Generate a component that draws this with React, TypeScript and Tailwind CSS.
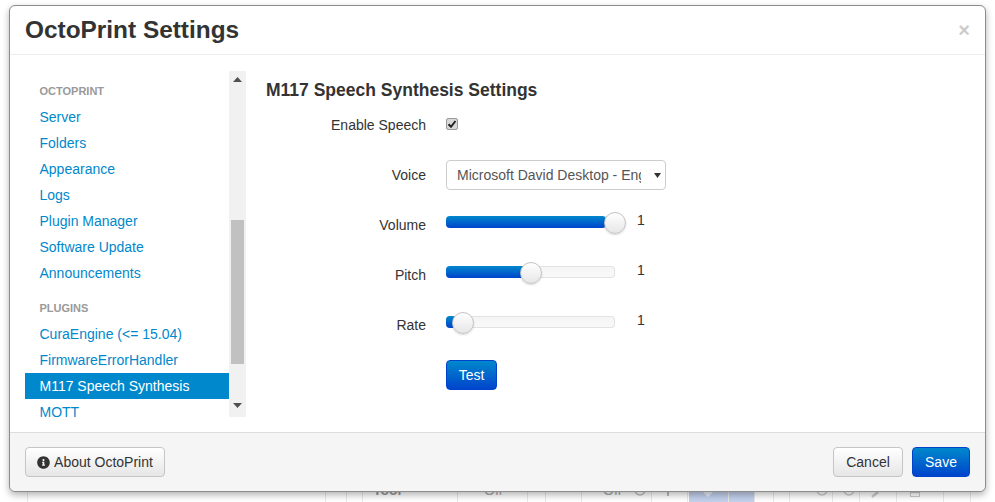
import { FaInfoCircle } from "react-icons/fa";

const FONT = "font-['Liberation_Sans',Arial,sans-serif]";

const coreLinks = ["Server", "Folders", "Appearance", "Logs", "Plugin Manager", "Software Update", "Announcements"];
const pluginLinks = ["CuraEngine (<= 15.04)", "FirmwareErrorHandler", "M117 Speech Synthesis", "MQTT"];

function NavLink({ label }: { label: string }) {
  const active = label === "M117 Speech Synthesis";
  return (
    <div className={`h-[26px] pl-[14.5px] text-[14px] leading-[26px] ${active ? "bg-[#0088cc] text-white" : "text-[#0088cc]"}`}>
      {label}
    </div>
  );
}

function FieldRow({ label, children }: { label: string; children: React.ReactNode }) {
  return (
    <div className="flex h-[50px] items-start">
      <div className="w-[160px] pt-[1px] text-right text-[14px] leading-[20px] text-[#333]">{label}</div>
      <div className="ml-[20px] min-w-0 flex-1">{children}</div>
    </div>
  );
}

function Slider({ fill, handle }: { fill: number; handle: number }) {
  return (
    <div className="flex h-[30px] items-start">
      <div className="relative mt-[2px] h-[12px] w-[169px] rounded-[4px] bg-[linear-gradient(to_bottom,#f5f5f5,#f9f9f9)] shadow-[inset_0_0_0_1px_#e3e3e3]">
        <div
          className="h-full rounded-[4px] bg-[linear-gradient(to_bottom,#0088cc,#0044cc)]"
          style={{ width: fill }}
        />
        <div
          className="absolute top-[-4px] h-[22px] w-[22px] rounded-full border border-[#c4c4c4] bg-[linear-gradient(to_bottom,#ffffff,#e6e6e6)] shadow-[0_1px_2px_rgba(0,0,0,0.15)]"
          style={{ left: handle }}
        />
      </div>
      <span className="ml-[22px] mt-[-1px] text-[14px] leading-[14px] text-[#333]">1</span>
    </div>
  );
}

const gridLines = [27, 325, 346, 362, 457, 527, 545, 581, 651, 687, 728, 754, 773, 789, 832, 859, 896, 943, 970];

export default function App() {
  return (
    <div className={`relative h-[502px] w-[995px] overflow-hidden bg-white ${FONT}`}>
      {/* table peeking out below the dialog */}
      <div className="absolute inset-x-0 top-[480px] h-[22px] bg-white">
        <div className="absolute left-[689px] top-0 h-full w-[65px] bg-[#c2d0ec]" />
        {gridLines.map((x) => (
          <div key={x} className="absolute top-0 h-full w-px bg-[#e8e8e8]" style={{ left: x }} />
        ))}
        <span className="absolute left-[373px] top-[0px] text-[14px] font-bold leading-[20px] text-[#999]">Tool</span>
        <span className="absolute left-[484px] top-[0px] text-[14px] leading-[20px] text-[#aaa]">Off</span>
        <span className="absolute left-[603px] top-[0px] text-[14px] leading-[20px] text-[#aaa]">Off</span>
        <svg width="12" height="22" viewBox="0 0 12 22" className="absolute left-[634px] top-0">
          <circle cx="6" cy="10" r="5" fill="none" stroke="#bbb" strokeWidth="1.5" />
        </svg>
        <div className="absolute left-[667px] top-[12px] h-[4px] w-[2px] bg-[#bbb]" />
        <svg width="10" height="22" viewBox="0 0 10 22" className="absolute left-[703px] top-0">
          <path d="M0 12 L10 12 L5 17 Z" fill="#e8edf7" />
        </svg>
        <svg width="12" height="22" viewBox="0 0 12 22" className="absolute left-[816px] top-0">
          <circle cx="6" cy="10" r="5" fill="none" stroke="#ccc" strokeWidth="1.5" />
        </svg>
        <svg width="12" height="22" viewBox="0 0 12 22" className="absolute left-[843px] top-0">
          <circle cx="6" cy="10" r="5" fill="none" stroke="#ccc" strokeWidth="1.5" />
        </svg>
        <svg width="12" height="22" viewBox="0 0 12 22" className="absolute left-[870px] top-0">
          <path d="M2 17 L8 12" fill="none" stroke="#ccc" strokeWidth="2.5" />
        </svg>
        <div className="absolute left-[910px] top-[12px] h-[5px] w-[10px] border border-[#ccc]" />
      </div>

      {/* dialog */}
      <div className="absolute left-[9px] top-[5px] flex h-[487px] w-[977px] flex-col overflow-hidden rounded-[6px] border border-[#8c8c8c] bg-white shadow-[0_3px_7px_rgba(0,0,0,0.3)]">
        <div className="flex h-[49px] shrink-0 items-center justify-between border-b border-[#eeeeee] pl-[15px] pr-[15px]">
          <h3 className="text-[24.4px] font-bold leading-[30px] text-[#333]">OctoPrint Settings</h3>
          <span className="text-[20px] font-bold leading-[20px] text-black opacity-20">×</span>
        </div>

        <div className="flex min-h-0 flex-1 pl-[15px] pt-[16px]">
          <div className="flex h-[346px] w-[221px] shrink-0">
            <div className="w-[204px] overflow-hidden">
              <div className="pl-[14.5px] pt-[13px] text-[11px] font-bold uppercase leading-[14px] text-[#999]">Octoprint</div>
              <div className="mt-[6px]">
                {coreLinks.map((l) => (
                  <NavLink key={l} label={l} />
                ))}
              </div>
              <div className="pl-[14.5px] pt-[15px] text-[11px] font-bold uppercase leading-[14px] text-[#999]">Plugins</div>
              <div className="mt-[6px]">
                {pluginLinks.map((l) => (
                  <NavLink key={l} label={l} />
                ))}
              </div>
            </div>
            {/* scrollbar */}
            <div className="flex w-[17px] flex-col items-center bg-[#f1f1f1]">
              <svg width="9" height="5" viewBox="0 0 9 5" className="mt-[6px] shrink-0">
                <path d="M0 5 L4.5 0 L9 5 Z" fill="#505050" />
              </svg>
              <div className="mt-[138px] h-[144px] w-[13px] shrink-0 bg-[#c1c1c1]" />
              <svg width="9" height="5" viewBox="0 0 9 5" className="mt-[39px] shrink-0">
                <path d="M0 0 L9 0 L4.5 5 Z" fill="#505050" />
              </svg>
            </div>
          </div>

          <div className="min-w-0 flex-1 pl-[20px]">
            <h4 className="pt-[9px] text-[17.5px] font-bold leading-[20px] text-[#333]">M117 Speech Synthesis Settings</h4>
            <div className="mt-[14px]">
              <FieldRow label="Enable Speech">
                <div className="mt-[4px] flex h-[12px] w-[12px] items-center justify-center rounded-[2px] border border-[#9a9a9a] bg-[#d8d8d8]">
                  <svg width="10" height="10" viewBox="0 0 10 10">
                    <path d="M1.5 5.2 L4 7.8 L8.5 2" fill="none" stroke="#222" strokeWidth="2" />
                  </svg>
                </div>
              </FieldRow>
              <FieldRow label="Voice">
                <div className="mt-[-4px] flex h-[30px] w-[220px] items-center rounded-[4px] border border-[#cccccc] bg-white pl-[10px] text-[14px] text-[#555]">
                  <span className="w-[184px] overflow-hidden whitespace-nowrap">Microsoft David Desktop - English (United States)</span>
                  <svg width="7" height="5" viewBox="0 0 7 5" className="ml-[13px]">
                    <path d="M0 0 L7 0 L3.5 5 Z" fill="#333" />
                  </svg>
                </div>
              </FieldRow>
              <FieldRow label="Volume">
                <Slider fill={160} handle={158} />
              </FieldRow>
              <FieldRow label="Pitch">
                <Slider fill={80} handle={74} />
              </FieldRow>
              <FieldRow label="Rate">
                <Slider fill={10} handle={6} />
              </FieldRow>
              <div className="pl-[180px]">
                <button className="mt-[-4px] block h-[30px] w-[51px] rounded-[4px] border border-[#0044cc] bg-[linear-gradient(to_bottom,#0088cc,#0044cc)] text-[14px] text-white">
                  Test
                </button>
              </div>
            </div>
          </div>
        </div>

        <div className="flex h-[59px] shrink-0 items-center justify-between rounded-b-[6px] border-t border-[#dddddd] bg-[#f5f5f5] pl-[15px] pr-[15px]">
          <button className="flex h-[30px] w-[140px] items-center justify-center gap-[4px] rounded-[4px] border border-[#c5c5c5] bg-[linear-gradient(to_bottom,#ffffff,#e6e6e6)] text-[14px] text-[#333]">
            <FaInfoCircle className="h-[13px] w-[13px]" />
            About OctoPrint
          </button>
          <div className="flex gap-[9px]">
            <button className="h-[30px] w-[70px] rounded-[4px] border border-[#c5c5c5] bg-[linear-gradient(to_bottom,#ffffff,#e6e6e6)] text-[14px] text-[#333]">
              Cancel
            </button>
            <button className="h-[30px] w-[58px] rounded-[4px] border border-[#0044cc] bg-[linear-gradient(to_bottom,#0088cc,#0044cc)] text-[14px] text-white">
              Save
            </button>
          </div>
        </div>
      </div>
    </div>
  );
}
